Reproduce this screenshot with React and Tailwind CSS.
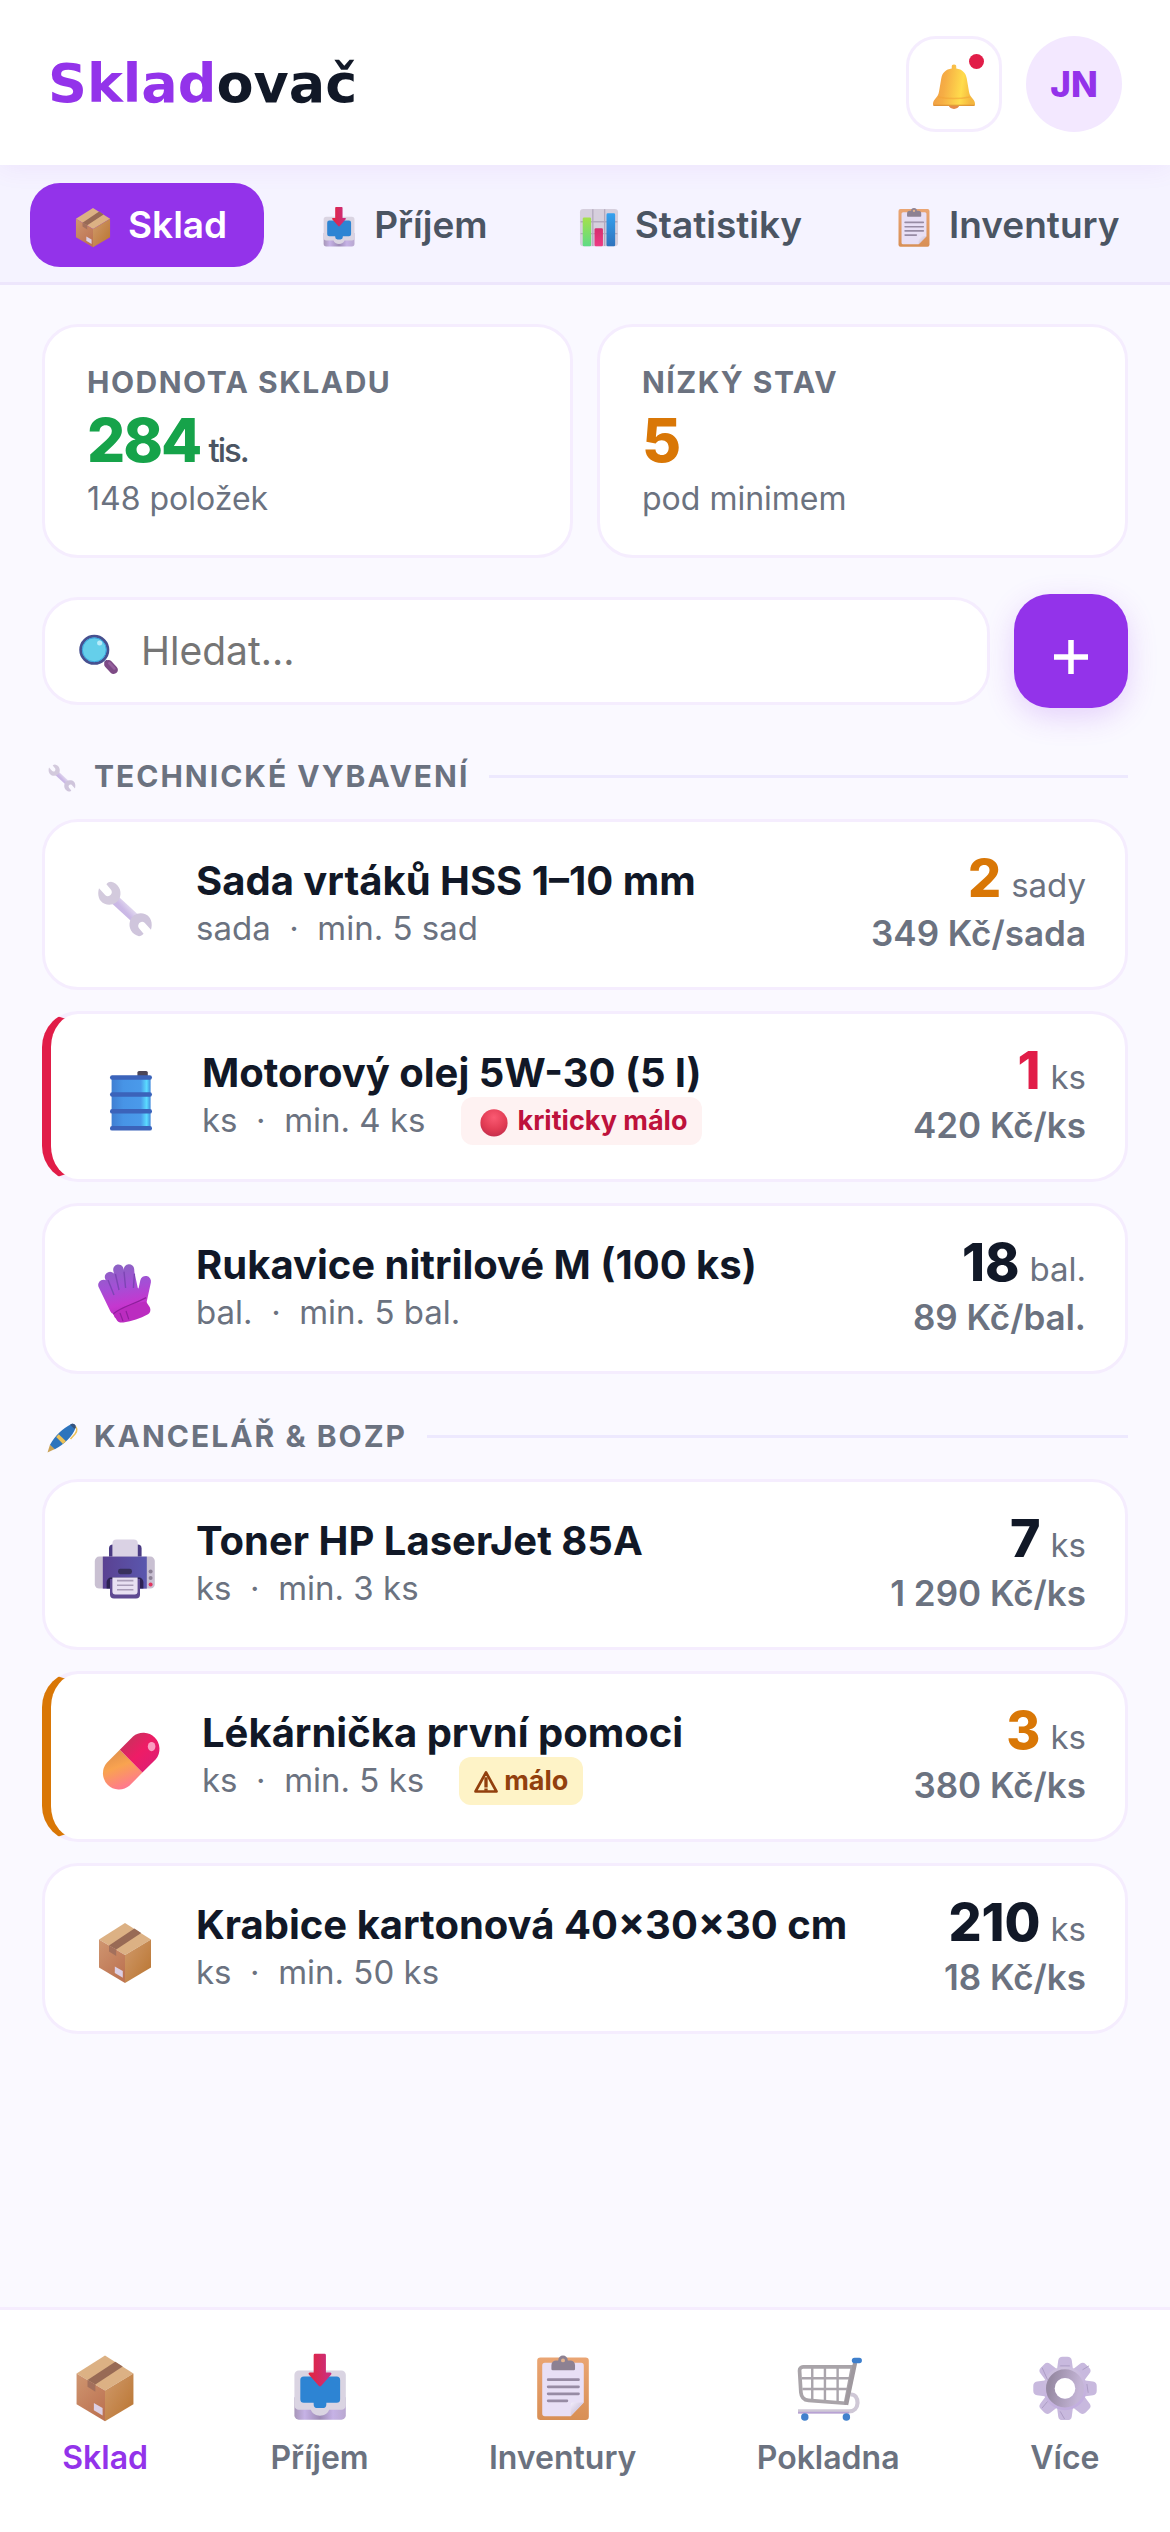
import React, { useState } from 'react';
import clsx from 'clsx';

// Gradients shared by all the icons below
const Gradients = () => (
  <svg className="absolute h-0 w-0" aria-hidden="true">
    <defs>
      <linearGradient id="boxLeft" x1="0" y1="0" x2="0.6" y2="1">
        <stop offset="0" stopColor="#cf9670" />
        <stop offset="1" stopColor="#bd7453" />
      </linearGradient>
      <linearGradient id="boxRight" x1="0" y1="0" x2="1" y2="1">
        <stop offset="0" stopColor="#d09a6c" />
        <stop offset="1" stopColor="#b9742f" />
      </linearGradient>
      <linearGradient id="arrow" x1="0" y1="0" x2="1" y2="0">
        <stop offset="0" stopColor="#e3243b" />
        <stop offset="1" stopColor="#c72f86" />
      </linearGradient>
      <linearGradient id="trayBase" x1="0" y1="0" x2="1" y2="0">
        <stop offset="0" stopColor="#a796b8" />
        <stop offset="0.2" stopColor="#c6b2e6" />
        <stop offset="0.5" stopColor="#9d8bb5" />
        <stop offset="0.75" stopColor="#c6b2e6" />
        <stop offset="1" stopColor="#b9a8d0" />
      </linearGradient>
      <linearGradient id="bell" x1="0" y1="0" x2="1" y2="0.15">
        <stop offset="0" stopColor="#ee9a44" />
        <stop offset="0.35" stopColor="#f6ae45" />
        <stop offset="0.75" stopColor="#ffdc4c" />
        <stop offset="1" stopColor="#f4b73f" />
      </linearGradient>
      <linearGradient id="barGreen" x1="0" y1="0" x2="0" y2="1">
        <stop offset="0" stopColor="#a5e04b" />
        <stop offset="1" stopColor="#5edb85" />
      </linearGradient>
      <linearGradient id="barPink" x1="0" y1="0" x2="0" y2="1">
        <stop offset="0" stopColor="#d42f6e" />
        <stop offset="1" stopColor="#ee3a84" />
      </linearGradient>
      <linearGradient id="barBlue" x1="0" y1="0" x2="0" y2="1">
        <stop offset="0" stopColor="#35a1ee" />
        <stop offset="1" stopColor="#2f72bd" />
      </linearGradient>
      <linearGradient id="steel" gradientUnits="userSpaceOnUse" x1="6" y1="24" x2="26" y2="6">
        <stop offset="0" stopColor="#bfa9e0" />
        <stop offset="0.45" stopColor="#cbb9e6" />
        <stop offset="0.6" stopColor="#e4dcf0" />
        <stop offset="1" stopColor="#cfc6da" />
      </linearGradient>
      <linearGradient id="drum" x1="0" y1="0" x2="1" y2="0">
        <stop offset="0" stopColor="#3f7fd2" />
        <stop offset="0.3" stopColor="#4794e6" />
        <stop offset="0.75" stopColor="#4a9aea" />
        <stop offset="0.9" stopColor="#5bdcff" />
        <stop offset="1" stopColor="#3f8ade" />
      </linearGradient>
      <linearGradient id="glove" gradientUnits="userSpaceOnUse" x1="14" y1="2" x2="19" y2="28">
        <stop offset="0" stopColor="#8d62c4" />
        <stop offset="0.4" stopColor="#a44fd6" />
        <stop offset="0.75" stopColor="#c537cf" />
        <stop offset="1" stopColor="#b52bbb" />
      </linearGradient>
      <linearGradient id="printer" x1="0" y1="0" x2="1" y2="0">
        <stop offset="0" stopColor="#5a4192" />
        <stop offset="1" stopColor="#5a57ae" />
      </linearGradient>
      <linearGradient id="pillTop" x1="0" y1="0" x2="1" y2="1">
        <stop offset="0" stopColor="#b83a58" />
        <stop offset="0.5" stopColor="#ee1c66" />
        <stop offset="1" stopColor="#d81e78" />
      </linearGradient>
      <linearGradient id="pillBottom" x1="0" y1="0" x2="0.4" y2="1">
        <stop offset="0" stopColor="#d98a4a" />
        <stop offset="0.5" stopColor="#f9a350" />
        <stop offset="1" stopColor="#ff7a8c" />
      </linearGradient>
      <linearGradient id="gear" x1="0" y1="0" x2="0.2" y2="1">
        <stop offset="0" stopColor="#cfc3de" />
        <stop offset="1" stopColor="#c2aede" />
      </linearGradient>
      <linearGradient id="gearRing" x1="0" y1="0.3" x2="1" y2="0.5">
        <stop offset="0" stopColor="#978aa3" />
        <stop offset="1" stopColor="#c4b5d6" />
      </linearGradient>
      <linearGradient id="cork" x1="0" y1="0" x2="0" y2="1">
        <stop offset="0" stopColor="#eaa573" />
        <stop offset="1" stopColor="#d88f55" />
      </linearGradient>
      <linearGradient id="fold" x1="0" y1="0" x2="1" y2="1">
        <stop offset="0" stopColor="#f2edfa" />
        <stop offset="1" stopColor="#b9abca" />
      </linearGradient>
      <radialGradient id="ball" cx="0.5" cy="0.3" r="0.75">
        <stop offset="0" stopColor="#fa5a72" />
        <stop offset="0.6" stopColor="#e23c54" />
        <stop offset="1" stopColor="#c02c4c" />
      </radialGradient>
    </defs>
  </svg>
);

const Icon = ({ className, children }) => (
  <svg viewBox="0 -2 32 32" className={clsx('shrink-0 overflow-visible', className)} fill="none" aria-hidden="true">
    {children}
  </svg>
);

const BoxIcon = (props) => (
  <Icon {...props}>
    <path d="M16 1 29 9.2 16 17 3 9.2Z" fill="#dcb184" />
    <path d="M3 9.2 16 17V31L3 23.3Z" fill="url(#boxLeft)" />
    <path d="M29 9.2 16 17V31l13-7.7Z" fill="url(#boxRight)" />
    <path d="M20.7 3.8 24.1 6 11.6 14.2 8 12.2Z" fill="#986a55" />
    <path d="M8 12.2l3.6 2v3.3L8 15.2Z" fill="#a3705c" />
    <path d="M10.9 22.7l4 2.3v3.4l-4-2.4Z" fill="#dccfe4" />
  </Icon>
);

const InboxIcon = (props) => (
  <Icon {...props}>
    <path d="M4.3 20h23.5v8.3a2 2 0 0 1-2 2H6.3a2 2 0 0 1-2-2Z" fill="url(#trayBase)" />
    <path d="M6.3 7.8h19.5a2 2 0 0 1 2 2v14a2 2 0 0 1-2 2h-5.6c-.6 1.7-2.2 2.7-4.2 2.7s-3.6-1-4.2-2.7H6.3a2 2 0 0 1-2-2v-14a2 2 0 0 1 2-2Z" fill="#dad4e2" />
    <path d="M8.6 10.6h15a1.6 1.6 0 0 1 1.6 1.6v8.8a1.6 1.6 0 0 1-1.6 1.6h-4.7v.6a1.8 1.8 0 0 1-1.8 1.8h-2.2a1.8 1.8 0 0 1-1.8-1.8v-.6H8.6A1.6 1.6 0 0 1 7 21v-8.8a1.6 1.6 0 0 1 1.6-1.6Z" fill="#2d84d3" />
    <path d="M13.7.2h4.4a.6.6 0 0 1 .6.6v7.9h1.9c.6 0 .8.5.5.9l-4.5 5.2c-.4.4-.8.4-1.2 0l-4.5-5.2c-.3-.4-.1-.9.5-.9h1.7V.8a.6.6 0 0 1 .6-.6Z" fill="url(#arrow)" />
  </Icon>
);

const ChartIcon = (props) => (
  <Icon {...props}>
    <rect x="1.5" y="1.8" width="29" height="28.4" rx="2.5" fill="#d6cfdd" />
    <path d="M2 11.5h28M2 20.5h28M11.3 2v28M20.3 2v28" stroke="#b3a9bd" />
    <rect x="3.6" y="8.2" width="6.4" height="22" rx="1" fill="url(#barGreen)" />
    <rect x="12.6" y="16.5" width="6.4" height="13.7" rx="1" fill="url(#barPink)" />
    <rect x="21.7" y="5.1" width="6.6" height="25.1" rx="1" fill="url(#barBlue)" />
  </Icon>
);

const ClipboardIcon = (props) => (
  <Icon {...props}>
    <rect x="4.2" y="1.9" width="23.6" height="28.6" rx="1.5" fill="url(#cork)" />
    <path d="M7.7 4.3h16.6a1.2 1.2 0 0 1 1.2 1.2v17l-6 6.2H7.7a1.2 1.2 0 0 1-1.2-1.2v-22a1.2 1.2 0 0 1 1.2-1.2Z" fill="#e8dff5" />
    <path d="M19.5 28.6v-5.1a1 1 0 0 1 1-1h5Z" fill="url(#fold)" />
    <path d="M16 1a2.2 2.2 0 0 1 2.2 2.2h1.1a2.2 2.2 0 0 1 2.2 2.2v1.7a.6.6 0 0 1-.6.6h-9.6a.6.6 0 0 1-.6-.6V5.4a2.2 2.2 0 0 1 2.2-2.2h.9A2.2 2.2 0 0 1 16 1Z" fill="#8d8192" />
    <circle cx="16" cy="3.2" r="0.9" fill="#e2b48f" />
    <path d="M9.2 12h13.9M9.2 15.3h13.9M9.2 18.5h13.9M9.2 21.7h8.6" stroke="#978ba4" strokeWidth="1.2" strokeLinecap="round" />
  </Icon>
);

const CartIcon = (props) => (
  <Icon {...props}>
    <path d="M26.2 18.8c2.2-.2 3.4 1.6 3.3 3.9-.1 2.3-1.6 3.8-3.8 3.8H2.3" stroke="#cfc8d6" strokeWidth="1.9" />
    <path d="M2.3 27.1h23.4" stroke="#b8a2d4" strokeWidth="0.8" />
    <path d="M4 11.4h22M4.3 16.3h21M8.8 6.5v15M14.6 6.5v15M20.4 6.5v16" stroke="#aaa5ac" strokeWidth="1.1" />
    <path d="M27.2 6.2H4.6a1.6 1.6 0 0 0-1.6 1.7l.6 9.9c.2 2.3 1.3 3.5 3.5 3.7l16.9 1.3Z" stroke="#a9a4a9" strokeWidth="1.7" strokeLinejoin="round" />
    <path d="M28.4 4.3 24.3 23.5" stroke="#9f999f" strokeWidth="1.9" />
    <rect x="26.9" y="2" width="4.6" height="2.5" rx="1.2" fill="#3e7fcc" />
    <circle cx="5.4" cy="29.1" r="1.7" fill="#4181cd" />
    <circle cx="24.4" cy="29.1" r="1.7" fill="#4181cd" />
  </Icon>
);

const teeth = [0, 45, 90, 135, 180, 225, 270, 315];

const GearIcon = (props) => (
  <Icon {...props}>
    {teeth.map((angle) => (
      <path
        key={angle}
        d="M12.2 8.5 12.9 3.2A2 2 0 0 1 14.9 1.5h2.2a2 2 0 0 1 2 1.7l.7 5.3Z"
        transform={`rotate(${angle} 16 16)`}
        fill="#c8b9de"
      />
    ))}
    <circle cx="16" cy="16" r="10" fill="url(#gear)" />
    <circle cx="16" cy="16" r="6.7" stroke="url(#gearRing)" strokeWidth="4" />
    <circle cx="16" cy="16" r="4.7" fill="#fff" />
    <path d="M5.5 6.5 8 12M13.8 5.7h4.4M24 7.5l3-1.8M26 14l.6 4M13.8 26.5l2 3.5M8 22l-2.5 3" stroke="#a898c0" strokeWidth="0.4" />
  </Icon>
);

const BellIcon = (props) => (
  <Icon {...props}>
    <path d="M12.5 28h7a3.5 2.6 0 0 1-7 0Z" fill="#e58a48" />
    <path d="M16 1a1.5 1.5 0 0 1 1.5 1.6v1.1c4 .5 6.3 2.9 7 6.6l1.5 8.9c.4 2.2 1.2 3.3 2.6 4.8 1 1.1 1.4 2.2 1.4 3.4v.3a.9.9 0 0 1-.9.9H2.9a.9.9 0 0 1-.9-.9v-.3c0-1.2.4-2.3 1.4-3.4C4.8 22.5 5.6 21.4 6 19.2l1.5-8.9c.7-3.7 3-6.1 7-6.6V2.6A1.5 1.5 0 0 1 16 1Z" fill="url(#bell)" />
    <path d="M5.5 22.6c6 1.3 15 1.3 21 0" stroke="#f1a437" strokeOpacity="0.6" />
    <path d="M2.3 28.2h27.4" stroke="#d98c35" strokeWidth="0.7" />
  </Icon>
);

const SearchIcon = (props) => (
  <Icon {...props}>
    <path d="m20.8 20.7 1.6 1.6" stroke="#4a4b85" strokeWidth="2.4" />
    <path d="m23 23 3.8 4" stroke="#7d4a85" strokeWidth="6" strokeLinecap="round" />
    <path d="m23.8 22.4 3.4 3.6" stroke="#95609d" strokeWidth="2" strokeLinecap="round" />
    <circle cx="13" cy="12.8" r="9.7" fill="#65cfea" stroke="#47508f" strokeWidth="2" />
    <circle cx="13" cy="12.8" r="8.5" stroke="#3aa2dc" strokeWidth="0.7" />
    <circle cx="16.8" cy="8" r="1.8" fill="#b9ecfa" />
  </Icon>
);

const WrenchIcon = (props) => (
  <Icon {...props}>
    <path d="M10 10.5 22 21.5" stroke="url(#steel)" strokeWidth="4.8" />
    <path d="M9 2.4c3.6.8 5.5 4.2 4.5 7.6-1 3.2-4.6 4.7-7.7 3.4C3 12.2 2 9 3 5.6l3.2 3.5c1 .9 2.4.5 3-.7.4-.8.2-1.6-.4-2.3L6.7 3.6c.7-.8 1.5-1.2 2.3-1.2Z" fill="#d3cadd" />
    <path d="M23 29.6c-3.6-.8-5.5-4.2-4.5-7.6 1-3.2 4.6-4.7 7.7-3.4 2.8 1.2 3.8 4.4 2.8 7.8l-3.2-3.5c-1-.9-2.4-.5-3 .7-.4.8-.2 1.6.4 2.3l2.1 2.5c-.7.8-1.5 1.2-2.3 1.2Z" fill="#cfc5dc" />
  </Icon>
);

const DrumIcon = (props) => (
  <Icon {...props}>
    <rect x="19.2" y="1" width="5.2" height="3" rx="0.8" fill="#4c4658" />
    <rect x="6.3" y="4" width="19.5" height="26" fill="url(#drum)" />
    {[3.1, 11.6, 20, 28.5].map((y) => (
      <rect key={y} x="5.5" y={y} width="21" height="2.3" rx="1.1" fill="#3b63ba" />
    ))}
  </Icon>
);

const GloveIcon = (props) => (
  <Icon {...props}>
    <path d="M5.2 12 11 24M8.5 8 13 20M12.7 4.3 15.5 18M18 4.2 19 18" stroke="url(#glove)" strokeWidth="5.2" strokeLinecap="round" />
    <path d="m26.3 10.2-2.6 12" stroke="url(#glove)" strokeWidth="5.4" strokeLinecap="round" />
    <path d="M6 14 20.8 6l1.6 7.5 3.9 2-.3 5.5L11 28.5Z" fill="url(#glove)" />
    <path d="M10 26.5c3-3.8 10-5.2 16.5-6.3l1.9 2.9c.6 1.4.3 2.8-.9 3.5-4 2.3-8 3.4-12.3 4.1-1.5.2-2.8-.1-3.5-1.5Z" fill="#bb2cc0" />
    <path d="M7.5 9.5 10.5 17M11.2 6.5 13 14.5M15.5 5.3l.8 8.2M20.7 6.5l-.5 7" stroke="#7d45b4" strokeWidth="0.7" />
    <path d="M10.2 26.4c4-3.4 9.3-4.4 16.4-8.1M13.5 26l1.5 4M16.5 25l1.4 4.2" stroke="#8f1f9d" strokeWidth="0.6" />
  </Icon>
);

const PrinterIcon = (props) => (
  <Icon {...props}>
    <path d="M8 12V5.8a2 2 0 0 1 2-2h12.3a2 2 0 0 1 2 2V12Z" fill="#4b3b83" />
    <path d="M9.7 11V3.3a2 2 0 0 1 2-2h8.7a2 2 0 0 1 2 2V11Z" fill="#dad2e4" />
    <rect x="0.9" y="9.8" width="30" height="16" rx="2.2" fill="#c9c0d2" />
    <rect x="4.9" y="9.8" width="22" height="16" fill="url(#printer)" />
    <rect x="12.5" y="15.9" width="7" height="2.7" rx="1.2" fill="#37305c" />
    <path d="M6.8 25.8v-3.3a2.2 2.2 0 0 1 2.2-2.2h14a2.2 2.2 0 0 1 2.2 2.2v3.3Z" fill="#2d2352" />
    <path d="M8.5 21h15v7.7a2 2 0 0 1-2 2h-11a2 2 0 0 1-2-2Z" fill="#5f4a92" />
    <path d="M9.7 20.3h12.6v7a1.5 1.5 0 0 1-1.5 1.5h-9.6a1.5 1.5 0 0 1-1.5-1.5Z" fill="#e8e0f2" />
    <path d="M12 21.8h8.2M12 24.1h8.2M12 26.4h8.2" stroke="#a99db8" strokeWidth="0.8" />
    <circle cx="28.8" cy="17.3" r="1" fill="#8b8094" />
    <circle cx="28.8" cy="20.5" r="1" fill="#8b8094" />
    <circle cx="28.8" cy="23.8" r="1" fill="#e0355f" />
  </Icon>
);

const PenIcon = (props) => (
  <Icon {...props}>
    <path d="M1.5 30.5 4 22.5l5 4.6Z" fill="#c9a155" />
    <path d="M4 22.8C9 13.5 17 6 25.5 2c1.8-.9 4.6 1 4.3 3.2C26.5 14.5 18.5 22 8.8 27.2Z" fill="#2d74bd" />
    <path d="m12.7 12.3 7.3 7-3 2.7-6.8-6.9Z" fill="#ecc158" />
    <path d="M27.5 3.5c4 1.6 4.2 5 1.5 8.5l-4.5 5" stroke="#ecc158" strokeWidth="1.5" />
    <path d="M25.5 2c2-1 4.5.8 4.3 3.2L28.7 7 24 2.8Z" fill="#36537e" />
  </Icon>
);

const PillIcon = (props) => (
  <Icon {...props}>
    <path d="M10.4 10.4 3.8 17a8.1 8.1 0 0 0 11.4 11.4l6.5-6.6Z" fill="url(#pillBottom)" />
    <path d="M10.4 10.4 17 3.7a8.1 8.1 0 0 1 11.4 11.4l-6.7 6.7Z" fill="url(#pillTop)" />
    <ellipse cx="26.3" cy="8.8" rx="1.9" ry="2.3" fill="#fb9cc0" />
  </Icon>
);

const BallIcon = (props) => (
  <Icon {...props}>
    <circle cx="16" cy="16" r="14.5" fill="url(#ball)" />
  </Icon>
);

const WarningIcon = (props) => (
  <Icon {...props}>
    <path d="M16 2.5 30 28H2Z" stroke="currentColor" strokeWidth="3.6" strokeLinejoin="round" />
    <path d="M16 9v13.5M16 24v3" stroke="currentColor" strokeWidth="4.4" />
  </Icon>
);

const tabs = [
  { name: 'Sklad', icon: BoxIcon },
  { name: 'Příjem', icon: InboxIcon },
  { name: 'Statistiky', icon: ChartIcon },
  { name: 'Inventury', icon: ClipboardIcon },
];

const navItems = [
  { name: 'Sklad', icon: BoxIcon },
  { name: 'Příjem', icon: InboxIcon },
  { name: 'Inventury', icon: ClipboardIcon },
  { name: 'Pokladna', icon: CartIcon },
  { name: 'Více', icon: GearIcon },
];

const sections = [
  {
    title: 'Technické vybavení',
    icon: WrenchIcon,
    items: [
      { name: 'Sada vrtáků HSS 1–10 mm', icon: WrenchIcon, unit: 'sada', min: '5 sad', count: 2, countUnit: 'sady', price: '349 Kč/sada', countColor: 'text-[#d97706]' },
      { name: 'Motorový olej 5W-30 (5 l)', icon: DrumIcon, unit: 'ks', min: '4 ks', count: 1, countUnit: 'ks', price: '420 Kč/ks', countColor: 'text-[#e11d48]', level: 'critical' },
      { name: 'Rukavice nitrilové M (100 ks)', icon: GloveIcon, unit: 'bal.', min: '5 bal.', count: 18, countUnit: 'bal.', price: '89 Kč/bal.' },
    ],
  },
  {
    title: 'Kancelář & BOZP',
    icon: PenIcon,
    items: [
      { name: 'Toner HP LaserJet 85A', icon: PrinterIcon, unit: 'ks', min: '3 ks', count: 7, countUnit: 'ks', price: '1 290 Kč/ks' },
      { name: 'Lékárnička první pomoci', icon: PillIcon, unit: 'ks', min: '5 ks', count: 3, countUnit: 'ks', price: '380 Kč/ks', countColor: 'text-[#d97706]', level: 'low' },
      { name: 'Krabice kartonová 40×30×30 cm', icon: BoxIcon, unit: 'ks', min: '50 ks', count: 210, countUnit: 'ks', price: '18 Kč/ks' },
    ],
  },
];

const Header = () => (
  <header className="relative z-10 flex items-center justify-between bg-white px-12 pt-9 pb-[33px] shadow-[0_3px_24px_rgba(147,51,234,0.08)]">
    <div className="font-['DejaVu_Sans',sans-serif] text-[54px] leading-[60px] font-bold text-[#111827]">
      <span className="text-[#9333ea]">Sklad</span>ovač
    </div>
    <div className="flex gap-6">
      <button
        type="button"
        aria-label="Upozornění"
        className="relative flex size-24 items-center justify-center rounded-[30px] border-3 border-[#f5edfe] bg-white"
      >
        <BellIcon className="size-12" />
        <span className="absolute top-[15px] right-[15px] size-[15px] rounded-full bg-[#e11d48]" />
      </button>
      <button
        type="button"
        className="flex size-24 items-center justify-center rounded-full bg-[#f3e8ff] text-[35px] font-extrabold text-[#9333ea]"
      >
        JN
      </button>
    </div>
  </header>
);

const StatCard = ({ label, value, suffix, note, color }) => (
  <div className="rounded-[36px] border-3 border-[#f5edfe] bg-white px-[42px] py-9">
    <div className="text-[30px] leading-[38px] font-bold tracking-wider text-[#6b7280] uppercase">{label}</div>
    <div className="flex items-baseline gap-2 tracking-[-2px]">
      <span className={clsx('text-[60px] leading-[78px] font-extrabold', color)}>{value}</span>
      {suffix && <span className="text-[33px] leading-10 font-medium text-[#4b5563]">{suffix}</span>}
    </div>
    <div className="text-[32px] leading-10 text-[#6b7280]">{note}</div>
  </div>
);

const Badge = ({ level }) =>
  level === 'critical' ? (
    <span className="flex h-12 items-center gap-1.5 rounded-xl bg-[#fef2f2] px-[15px] text-[27px] font-bold text-[#be123c]">
      <span className="flex w-9 justify-center">
        <BallIcon className="size-[30px]" />
      </span>
      kriticky málo
    </span>
  ) : (
    <span className="flex h-12 items-center gap-1.5 rounded-xl bg-[#fef3c7] px-[15px] text-[27px] font-bold text-[#92400e]">
      <WarningIcon className="size-6" />
      málo
    </span>
  );

const ItemCard = ({ item }) => (
  <li
    className={clsx(
      'flex items-center gap-[30px] rounded-[36px] border-3 border-[#f5edfe] bg-white px-[39px] py-7',
      item.level === 'critical' && 'border-l-9 border-l-[#e11d48]',
      item.level === 'low' && 'border-l-9 border-l-[#d97706]'
    )}
  >
    <span className="flex w-[82px] shrink-0 justify-center">
      <item.icon className="size-16" />
    </span>
    <div className="min-w-0 flex-1">
      <h3 className="text-[40px] leading-12 font-bold text-[#111827]">{item.name}</h3>
      <div className="flex items-center gap-[35px] text-[33px] leading-[47px] text-[#6b7280]">
        <span>
          {item.unit}&nbsp; · &nbsp;min. {item.min}
        </span>
        {item.level && <Badge level={item.level} />}
      </div>
    </div>
    <div className="text-[#6b7280]">
      <div className="flex items-baseline justify-end gap-[10px]">
        <span className={clsx('text-[52px] leading-[57px] font-extrabold', item.countColor || 'text-[#111827]')}>
          {item.count}
        </span>
        <span className="text-[33px] leading-10">{item.countUnit}</span>
      </div>
      <div className="text-right text-[35px] leading-[52px] font-semibold">{item.price}</div>
    </div>
  </li>
);

const App = () => {
  const [activeTab, setActiveTab] = useState('Sklad');
  const [query, setQuery] = useState('');

  return (
    <div className="flex min-h-screen flex-col bg-[#faf9ff] font-['Inter',sans-serif] text-[#111827]">
      <Gradients />
      <Header />

      <nav className="flex gap-3 overflow-hidden border-b-3 border-[#ede6fc] bg-[#f5f3ff] px-[30px] pt-[18px] pb-[15px]">
        {tabs.map((tab) => (
          <button
            key={tab.name}
            type="button"
            onClick={() => setActiveTab(tab.name)}
            className={clsx(
              'flex h-[84px] shrink-0 items-center gap-[10px] rounded-[30px] px-[37px] text-[37px] font-semibold',
              activeTab === tab.name ? 'bg-[#9333ea] text-white' : 'text-[#4b5563]'
            )}
          >
            <span className="flex w-[51px] justify-center">
              <tab.icon className="size-[42px]" />
            </span>
            {tab.name}
          </button>
        ))}
      </nav>

      <main className="flex-1 px-[42px] pt-[39px] pb-12">
        <div className="grid grid-cols-2 gap-6">
          <StatCard label="Hodnota skladu" value="284" suffix="tis." note="148 položek" color="text-[#16a34a]" />
          <StatCard label="Nízký stav" value="5" note="pod minimem" color="text-[#d97706]" />
        </div>

        <div className="mt-9 mb-1.5 flex items-center gap-6">
          <label className="flex h-[108px] flex-1 items-center gap-5 rounded-[36px] border-3 border-[#f5edfe] bg-white px-[31px]">
            <SearchIcon className="size-[45px]" />
            <input
              type="text"
              aria-label="Hledat"
              placeholder="Hledat..."
              value={query}
              onChange={(e) => setQuery(e.target.value)}
              className="w-full bg-transparent text-[39px] outline-none placeholder:text-[#757575]"
            />
          </label>
          <button
            type="button"
            aria-label="Přidat položku"
            className="flex size-[114px] items-center justify-center rounded-[36px] bg-[#9333ea] text-white shadow-[0_9px_30px_rgba(147,51,234,0.2)]"
          >
            <svg viewBox="0 0 48 48" className="size-12" stroke="currentColor" strokeWidth="5.5" aria-hidden="true">
              <path d="M24 13v34M7 30h34" />
            </svg>
          </button>
        </div>

        {sections.map((section) => (
          <section key={section.title}>
            <h2 className="mb-[25px] flex items-center gap-4 pt-11 text-[30px] leading-9 font-bold tracking-[2px] text-[#6b7280] uppercase">
              <section.icon className="ml-1 size-8" />
              {section.title}
              <span className="ml-1 h-[3px] flex-1 bg-[#ede9fe]" />
            </h2>
            <ul className="flex flex-col gap-[21px]">
              {section.items.map((item) => (
                <ItemCard key={item.name} item={item} />
              ))}
            </ul>
          </section>
        ))}
      </main>

      <nav className="flex justify-around border-t-3 border-[#f5edfe] bg-white pt-[39px] pb-[54px]">
        {navItems.map((item, i) => (
          <a
            key={item.name}
            href="#"
            className={clsx(
              'flex min-w-[90px] flex-col items-center gap-[19px] text-[32px] leading-10 font-semibold',
              i === 0 ? 'text-[#9333ea]' : 'text-[#6b7280]'
            )}
          >
            <item.icon className="size-[70px]" />
            {item.name}
          </a>
        ))}
      </nav>
    </div>
  );
};

export default App;
